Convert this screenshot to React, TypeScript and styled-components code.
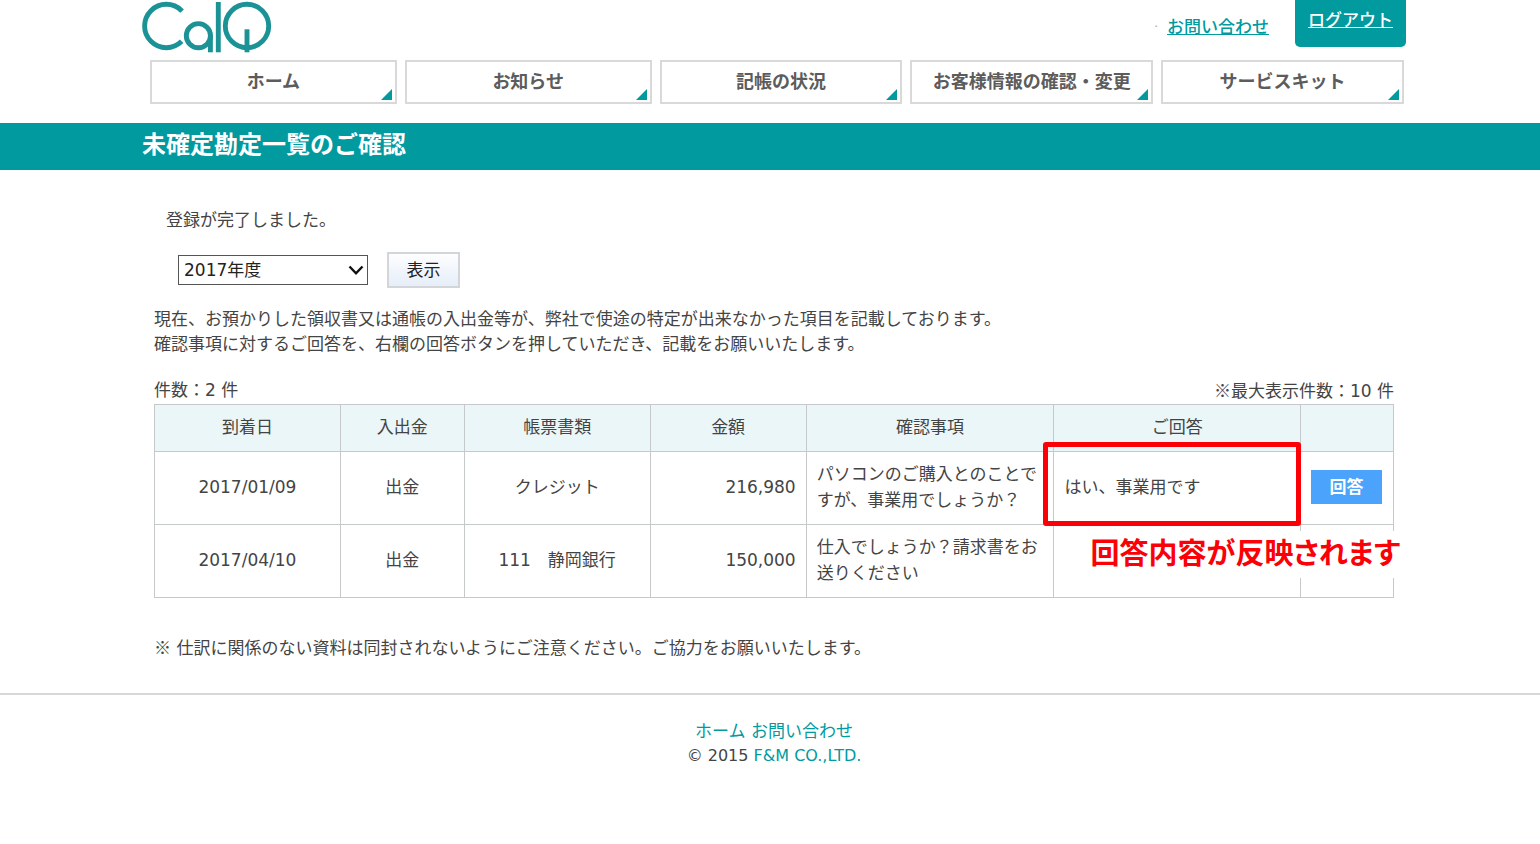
import React from "react";
import styled, { createGlobalStyle } from "styled-components";

const TEAL = "#009a9f";
const LINE = "#c6c9ca";

const GlobalStyle = createGlobalStyle`
  *, *::before, *::after { box-sizing: border-box; }
  body {
    margin: 0;
    background: #fff;
    color: #444;
    font-family: "DejaVu Sans", "Noto Sans CJK JP", sans-serif;
    font-size: 17px;
    line-height: 26px;
  }
  p, h1 { margin: 0; }
`;

const Container = styled.div`
  max-width: 1272px;
  margin: 0 auto;
  padding-left: 8px;
`;

const TopBar = styled.div`
  display: flex;
  align-items: flex-start;
  height: 60px;
`;

const LogoLink = styled.a`
  display: block;
  margin-right: auto;
  svg { display: block; }
`;

const ContactLink = styled.a`
  margin: 14px 26px 0 0;
  color: ${TEAL};
  font-weight: 500;
`;

const Dot = styled.span`
  margin: 14px 9px 0 0;
  color: #aaa;
  font-size: 12px;
`;

const LogoutLink = styled.a`
  padding: 7px 13px 14px;
  border-radius: 0 0 5px 5px;
  background: ${TEAL};
  color: #fff;
  font-weight: 500;
`;

const Nav = styled.nav`
  display: grid;
  grid-template-columns: 247fr 247fr 243fr 243fr 243fr;
  gap: 8px;
  padding: 0 2px 0 8px;
`;

const NavLink = styled.a`
  position: relative;
  height: 44px;
  border: 2px solid #d9d9d9;
  color: #5c5c5c;
  font-size: 18px;
  font-weight: 700;
  line-height: 39px;
  text-align: center;
  text-decoration: none;
  white-space: nowrap;
  &::after {
    content: "";
    position: absolute;
    right: 3px;
    bottom: 2px;
    border-left: 11px solid transparent;
    border-bottom: 11px solid ${TEAL};
  }
`;

const Banner = styled.header`
  margin-top: 19px;
  background: ${TEAL};
`;

const Title = styled.h1`
  padding-bottom: 3px;
  color: #fff;
  font-size: 24px;
  line-height: 44px;
`;

const Content = styled.main`
  padding: 37px 12px 32px;
`;

const Message = styled.p`
  padding-left: 12px;
`;

const FilterForm = styled.form`
  display: flex;
  align-items: center;
  gap: 19px;
  margin: 19px 0 19px 24px;
`;

const SelectWrap = styled.div`
  position: relative;
  svg {
    position: absolute;
    right: 4px;
    top: 10px;
    pointer-events: none;
  }
`;

const YearSelect = styled.select`
  display: block;
  appearance: none;
  width: 190px;
  height: 30px;
  padding: 0 5px;
  border: 1px solid #555;
  border-radius: 0;
  background: #fff;
  color: #222;
  font: inherit;
`;

const ShowButton = styled.button`
  width: 73px;
  height: 36px;
  padding: 0 0 1px;
  border: 2px solid #d2d6da;
  background: linear-gradient(#fdfeff, #e6eef8);
  color: #222;
  font: inherit;
`;

const Lead = styled.p`
  line-height: 25px;
`;

const Counts = styled.div`
  display: flex;
  justify-content: space-between;
  margin-top: 20px;
`;

const Mark = styled.span`
  font-family: "Noto Sans CJK JP", sans-serif;
`;

const Table = styled.table`
  width: 100%;
  border-collapse: collapse;
  table-layout: fixed;
`;

const Th = styled.th<{ $w: number }>`
  width: ${(p) => p.$w}%;
  height: 47px;
  padding: 0 0 3px;
  border: 1px solid ${LINE};
  background: #ebf6f8;
  font-weight: 400;
`;

const Td = styled.td<{ $align?: string }>`
  position: relative;
  height: 73px;
  padding: 0 10px 2px;
  border: 1px solid ${LINE};
  text-align: ${(p) => p.$align ?? "center"};
`;

const Highlight = styled.div`
  position: absolute;
  inset: -10px -1px -2px -11px;
  border: 5px solid #fb0007;
  border-radius: 3px;
`;

const Callout = styled.strong`
  position: absolute;
  z-index: 1;
  top: 79px;
  left: 32px;
  padding: 0 4px;
  background: #fff;
  color: #fb0007;
  font-size: 29px;
  font-feature-settings: "palt";
  line-height: 47px;
  white-space: nowrap;
`;

const AnswerButton = styled.button`
  display: block;
  width: 71px;
  height: 34px;
  padding: 0;
  border: 0;
  background: #4ba3fc;
  color: #fff;
  font: inherit;
  font-weight: 700;
`;

const Note = styled.p`
  margin-top: 36px;
`;

const Footer = styled.footer`
  border-top: 2px solid #d8d8d8;
  padding: 23px 0 0;
  text-align: center;
  a { color: ${TEAL}; text-decoration: none; }
`;

const Copyright = styled.p`
  font-size: 16px;
  line-height: 24px;
`;

const navItems = ["ホーム", "お知らせ", "記帳の状況", "お客様情報の確認・変更", "サービスキット"];

const columns: [string, number][] = [
  ["到着日", 15],
  ["入出金", 10],
  ["帳票書類", 15],
  ["金額", 12.6],
  ["確認事項", 20],
  ["ご回答", 19.9],
  ["", 7.5],
];

const rows = [
  {
    date: "2017/01/09",
    kind: "出金",
    source: "クレジット",
    amount: "216,980",
    question: ["パソコンのご購入とのことで", "すが、事業用でしょうか？"],
    answer: "はい、事業用です",
  },
  {
    date: "2017/04/10",
    kind: "出金",
    source: "111　静岡銀行",
    amount: "150,000",
    question: ["仕入でしょうか？請求書をお", "送りください"],
    answer: "",
  },
];

function Logo() {
  return (
    <svg width="130" height="54" viewBox="0 0 130 54" fill="none" stroke="#1b9295" strokeWidth="4.9" role="img" aria-label="CalQ">
      <circle cx="24.3" cy="26" r="21.7" strokeDasharray="102.3 34.1" transform="rotate(45 24.3 26)" />
      <circle cx="56.4" cy="35.7" r="12.1" />
      <line x1="68.4" y1="35" x2="68.4" y2="52.3" />
      <line x1="76.3" y1="2" x2="76.3" y2="52.3" />
      <circle cx="105" cy="26" r="21.7" />
      <line x1="105" y1="29.3" x2="105" y2="52.3" />
    </svg>
  );
}

export default function App() {
  return (
    <>
      <GlobalStyle />
      <Container>
        <TopBar>
          <LogoLink href="#home"><Logo /></LogoLink>
          <Dot>·</Dot>
          <ContactLink href="#contact">お問い合わせ</ContactLink>
          <LogoutLink href="#logout">ログアウト</LogoutLink>
        </TopBar>
        <Nav>
          {navItems.map((item) => (
            <NavLink key={item} href="#nav">{item}</NavLink>
          ))}
        </Nav>
      </Container>
      <Banner>
        <Container>
          <Title>未確定勘定一覧のご確認</Title>
        </Container>
      </Banner>
      <Container>
        <Content>
          <Message>登録が完了しました。</Message>
          <FilterForm onSubmit={(e) => e.preventDefault()}>
            <SelectWrap>
              <YearSelect aria-label="年度">
                <option>2017年度</option>
              </YearSelect>
              <svg width="16" height="11" viewBox="0 0 16 11" fill="none" stroke="#111" strokeWidth="2.4">
                <path d="M1.5 1.5 8 8.3 14.5 1.5" />
              </svg>
            </SelectWrap>
            <ShowButton type="submit">表示</ShowButton>
          </FilterForm>
          <Lead>
            現在、お預かりした領収書又は通帳の入出金等が、弊社で使途の特定が出来なかった項目を記載しております。
            <br />
            確認事項に対するご回答を、右欄の回答ボタンを押していただき、記載をお願いいたします。
          </Lead>
          <Counts>
            <span>件数：2 件</span>
            <span><Mark>※</Mark>最大表示件数：10 件</span>
          </Counts>
          <Table>
            <thead>
              <tr>
                {columns.map(([label, width]) => (
                  <Th key={label} $w={width} scope="col">{label}</Th>
                ))}
              </tr>
            </thead>
            <tbody>
              {rows.map((row) => (
                <tr key={row.date}>
                  <Td>{row.date}</Td>
                  <Td>{row.kind}</Td>
                  <Td>{row.source}</Td>
                  <Td $align="right">{row.amount}</Td>
                  <Td $align="left">
                    {row.question[0]}
                    <br />
                    {row.question[1]}
                  </Td>
                  <Td $align="left">
                    {row.answer}
                    {row.answer && (
                      <>
                        <Highlight />
                        <Callout>回答内容が反映されます</Callout>
                      </>
                    )}
                  </Td>
                  <Td>{row.answer && <AnswerButton type="button">回答</AnswerButton>}</Td>
                </tr>
              ))}
            </tbody>
          </Table>
          <Note><Mark>※</Mark> 仕訳に関係のない資料は同封されないようにご注意ください。ご協力をお願いいたします。</Note>
        </Content>
      </Container>
      <Footer>
        <Container>
          <p>
            <a href="#home">ホーム</a> <a href="#contact">お問い合わせ</a>
          </p>
          <Copyright>
            © 2015 <a href="#company">F&amp;M CO.,LTD.</a>
          </Copyright>
        </Container>
      </Footer>
    </>
  );
}
